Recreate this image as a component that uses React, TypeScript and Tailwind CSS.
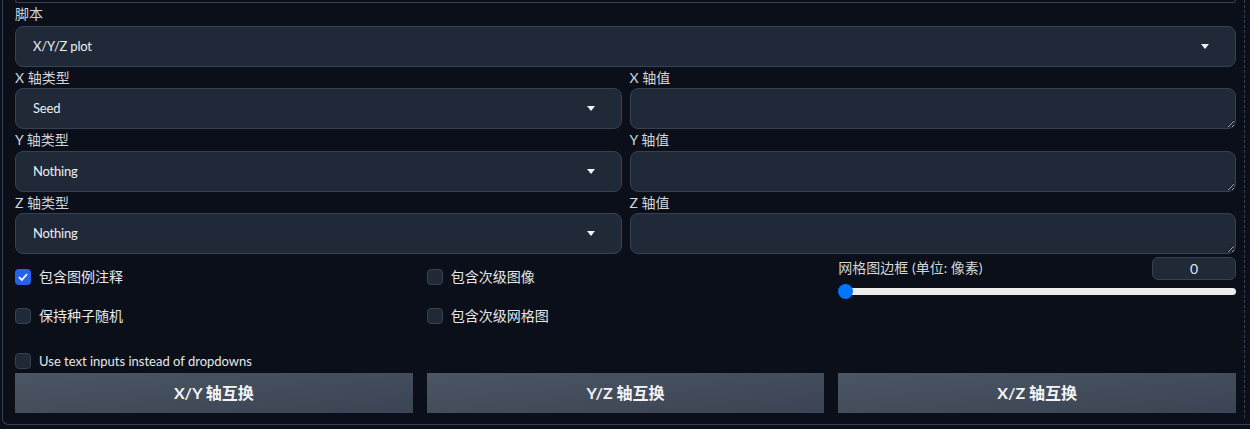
import React from "react";

const font = { fontFamily: 'Lato, "Noto Sans CJK SC", sans-serif' };

function Caret() {
  return (
    <svg width="8" height="5" viewBox="0 0 8 5" className="shrink-0">
      <path d="M0 0 L8 0 L4 5 Z" fill="#f3f4f6" />
    </svg>
  );
}

function Dropdown({ value }: { value: string }) {
  return (
    <div className="h-[41px] flex items-center justify-between pl-[17px] pr-[26px] rounded-[8px] border border-[#374151] bg-[#1f2937] text-[13px] tracking-[-0.2px] text-[#eceef1]">
      <span>{value}</span>
      <Caret />
    </div>
  );
}

function Field({ label, h, children }: { label: string; h: string; children: React.ReactNode }) {
  return (
    <div className="flex flex-col">
      <div className={"text-[14px] text-[#d1d5db] " + h}>{label}</div>
      {children}
    </div>
  );
}

function Check({ label, checked, small }: { label: string; checked?: boolean; small?: boolean }) {
  return (
    <div className="flex items-center gap-2 h-4">
      {checked ? (
        <div className="w-4 h-4 rounded-[4px] bg-[#2563eb] flex items-center justify-center">
          <svg width="10" height="8" viewBox="0 0 10 8">
            <path d="M1 4.2 L3.8 7 L9 1" fill="none" stroke="white" strokeWidth="1.8" />
          </svg>
        </div>
      ) : (
        <div className="w-4 h-4 rounded-[4px] border border-[#374151] bg-[#1f2937]" />
      )}
      <span className={(small ? "text-[13px]" : "text-[14px]") + " leading-4 text-[#e5e7eb]"}>{label}</span>
    </div>
  );
}

function SwapButton({ label }: { label: string }) {
  return (
    <button className="h-[40px] w-full bg-gradient-to-br from-[#4b5563] to-[#3b4454] text-[16px] font-bold text-[#f3f4f6]">
      {label}
    </button>
  );
}

export default function App() {
  const axes = [
    { name: "X", value: "Seed", lh: "h-[21px] leading-[21px]" },
    { name: "Y", value: "Nothing", lh: "h-[22px] leading-[22px]" },
    { name: "Z", value: "Nothing", lh: "h-[21px] leading-[21px]" },
  ];

  return (
    <div className="w-[1250px] h-[429px] overflow-hidden bg-[#0b0f19]" style={font}>
      <div className="ml-[2px] w-[1280px] h-[425px] border-l border-b border-[#374151] rounded-bl-[6px]">
        <div className="w-[1242px] h-[418px] border-r border-dashed border-[#374151] pl-[12px] pr-[8px]">
          {/* tail of the block above */}
          <div className="w-[1221px] h-[3px] border-x border-b border-[#374151] rounded-b-[6px]" />

          <Field label="脚本" h="h-[23px] leading-[22px]">
            <Dropdown value="X/Y/Z plot" />
          </Field>

          {axes.map((a) => (
            <div key={a.name} className="grid grid-cols-2 gap-2">
              <Field label={`${a.name} 轴类型`} h={a.lh}>
                <Dropdown value={a.value} />
              </Field>
              <Field label={`${a.name} 轴值`} h={a.lh}>
                <textarea className="h-[41px] resize-y rounded-[8px] border border-[#374151] bg-[#1f2937] outline-none" />
              </Field>
            </div>
          ))}

          <div className="grid grid-cols-3 gap-[14px]">
            <div className="pt-[15px] flex flex-col gap-[23px]">
              <Check label="包含图例注释" checked />
              <Check label="保持种子随机" />
            </div>
            <div className="pt-[15px] flex flex-col gap-[23px]">
              <Check label="包含次级图像" />
              <Check label="包含次级网格图" />
            </div>
            <div className="pt-[3px]">
              <div className="flex justify-between items-start">
                <span className="text-[14px] leading-4 mt-[3px] text-[#d1d5db]">网格图边框 (单位: 像素)</span>
                <div className="w-[84px] h-[23px] rounded-[6px] border border-[#374151] bg-[#1f2937] flex items-center justify-center text-[14px] text-[#e5e7eb]">
                  0
                </div>
              </div>
              <div className="relative mt-[4px] h-[15px] flex items-center pl-[1px]">
                <div className="w-full h-[7px] rounded-full bg-[#ececec]" />
                <div className="absolute left-0 top-0 w-[15px] h-[15px] rounded-full bg-[#0075ff]" />
              </div>
            </div>
          </div>

          <div className="mt-[29px]">
            <Check label="Use text inputs instead of dropdowns" small />
          </div>

          <div className="mt-[4px] grid grid-cols-3 gap-[14px]">
            <SwapButton label="X/Y 轴互换" />
            <SwapButton label="Y/Z 轴互换" />
            <SwapButton label="X/Z 轴互换" />
          </div>
        </div>
      </div>
    </div>
  );
}
